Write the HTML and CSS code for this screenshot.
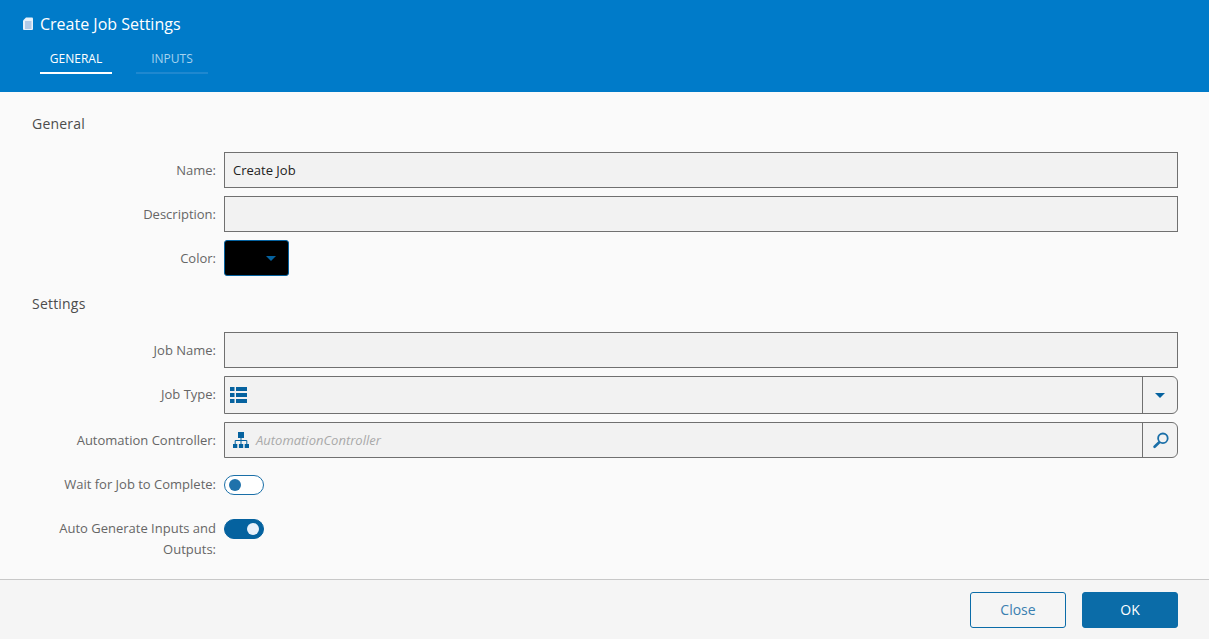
FILE: index.html
```html
<!DOCTYPE html>
<html lang="en">
<head>
<meta charset="utf-8">
<title>Create Job Settings</title>
<link rel="stylesheet" href="styles.css">
</head>
<body>
<div class="dialog">
  <header class="head">
    <div class="title">
      <svg class="title-icon" width="12" height="14" viewBox="0 0 12 14"><path fill="#e8f1fa" d="M4 0.500h6a1 1 0 0 1 1 1V12a1 1 0 0 1-1 1H2a1 1 0 0 1-1-1V3.500z"/><path fill="#7fa3d4" d="M3 4.500h6.500v1H3zM3 6.500h6.500v1H3zM3 8.500h6.500v1H3zM3 10.500h6.500v1H3z"/></svg>
      <span>Create Job Settings</span>
    </div>
    <nav class="tabs">
      <div class="tab active">GENERAL</div>
      <div class="tab">INPUTS</div>
    </nav>
  </header>
  <main class="body">
    <h2 class="section">General</h2>
    <div class="row"><label class="lbl">Name:</label><div class="field dark">Create Job</div></div>
    <div class="row"><label class="lbl">Description:</label><div class="field"></div></div>
    <div class="row"><label class="lbl">Color:</label><div class="color"><span class="caret"></span></div></div>
    <h2 class="section second">Settings</h2>
    <div class="row"><label class="lbl">Job Name:</label><div class="field"></div></div>
    <div class="row tall"><label class="lbl">Job Type:</label>
      <div class="field combo">
        <div class="combo-main">
          <svg width="17" height="16" viewBox="0 0 17 16"><path fill="#05629f" d="M0 0h4.500v4H0zM6 0h11v4H6zM0 6h4.500v4H0zM6 6h11v4H6zM0 12h4.500v4H0zM6 12h11v4H6z"/></svg>
        </div>
        <div class="combo-btn"><span class="caret"></span></div>
      </div>
    </div>
    <div class="row"><label class="lbl">Automation Controller:</label>
      <div class="field combo">
        <div class="combo-main org">
          <svg width="16" height="16" viewBox="0 0 16 16"><path fill="#05629f" d="M5 0h6v6H5zM0 12h4.300v4H0zM5.900 12h4.300v4H5.900zM11.700 12H16v4h-4.300z"/><path fill="none" stroke="#05629f" d="M8 6v6M2.200 12V8.500h11.600V12"/></svg>
          <span class="placeholder">AutomationController</span>
        </div>
        <div class="combo-btn search">
          <svg width="16" height="17" viewBox="0 0 16 17"><circle cx="9.900" cy="6.300" r="4.800" fill="none" stroke="#1a6fa8" stroke-width="1.800"/><path stroke="#1a6fa8" stroke-width="2.600" stroke-linecap="round" d="M6 10.500L1.600 14.800"/></svg>
        </div>
      </div>
    </div>
    <div class="row toggle-row"><label class="lbl">Wait for Job to Complete:</label><div class="toggle"><span class="knob"></span></div></div>
    <div class="row toggle-row"><label class="lbl">Auto Generate Inputs and Outputs:</label><div class="toggle on"><span class="knob"></span></div></div>
  </main>
  <footer class="foot">
    <button class="btn ghost">Close</button>
    <button class="btn primary">OK</button>
  </footer>
</div>
</body>
</html>
```
FILE: styles.css
```css
* { box-sizing: border-box; }
html, body { margin: 0; height: 100%; }
body { font-family: "Open Sans", sans-serif; color: #555; background: #fafafa; overflow: hidden; }
.dialog { width: 1209px; height: 639px; display: flex; flex-direction: column; }
.head { height: 92px; background: #007bc9; padding: 14px 0 0 22px; color: #fff; flex: none; }
.title { display: flex; align-items: center; gap: 6px; font-size: 16px; line-height: 20px; height: 20px; }
.title-icon { flex: none; }
.tabs { display: flex; gap: 24px; margin: 4px 0 0 18px; }
.tab { width: 72px; height: 36px; font-size: 12px; line-height: 42px; font-weight: 400; text-align: center; color: #a6d3ef; border-bottom: 2px solid #1f88cf; }
.tab.active { color: #fff; border-bottom-color: #fff; }
.body { flex: 1; min-height: 0; padding: 22px 31px 0 24px; }
.section { margin: 0 0 18px 8px; font-size: 14px; line-height: 20px; font-weight: 400; letter-spacing: 0.2px; color: #4c4c4c; }
.section.second { margin-top: 18px; }
.row { display: flex; gap: 8px; align-items: center; min-height: 36px; margin-bottom: 8px; }
.lbl { width: 192px; flex: none; text-align: right; font-size: 13px; line-height: 21px; color: #666; }
.field { flex: 1; height: 36px; background: #f2f2f2; border: 1px solid #707070; font-size: 13px; line-height: 35px; padding-left: 8px; color: #222; }
.row.tall .field { height: 38px; line-height: 36px; }
.row.tall { min-height: 38px; }
.row.tall .lbl { padding-bottom: 2px; }
.combo { display: flex; padding: 0; border-radius: 0 6px 6px 0; }
.combo-main { flex: 1; display: flex; align-items: center; gap: 7px; padding-left: 5px; }
.combo-main.org { padding-left: 8px; }
.combo-btn { width: 35px; flex: none; border-left: 1px solid #707070; display: flex; align-items: center; justify-content: center; }
.combo-btn.search { padding-left: 2px; }
.placeholder { font-style: italic; color: #a9a9a9; }
.color { width: 65px; height: 36px; background: #000; border: 1px solid #05629f; border-radius: 3px; display: flex; align-items: center; justify-content: flex-end; padding-right: 12px; }
.caret { width: 0; height: 0; border-left: 5px solid transparent; border-right: 5px solid transparent; border-top: 5px solid #05629f; }
.toggle { width: 40px; height: 20px; border: 1px solid #1a6fa8; border-radius: 10px; background: #fff; padding: 3px 4px; flex: none; display: flex; }
.knob { width: 12px; height: 12px; border-radius: 50%; background: #1f72ab; }
.toggle.on { background: #05629f; border-color: #05629f; justify-content: flex-end; }
.toggle.on .knob { background: #e8f0fa; }
.toggle-row { align-items: flex-start; min-height: 0; margin-bottom: 0; }
.toggle-row .toggle { margin-top: 9px; }
.toggle-row .lbl { padding-top: 8px; }
.toggle-row + .toggle-row { margin-top: 15px; }
.foot { height: 60px; flex: none; background: #f5f5f5; border-top: 1px solid #c8c8c8; display: flex; justify-content: flex-end; gap: 16px; padding: 12px 31px 0 0; }
.btn { width: 96px; height: 36px; border-radius: 3px; font-family: inherit; font-size: 14px; padding: 0 0 2px; }
.ghost { background: #f5f5f5; border: 1px solid #0b6ca8; color: #3a7fb0; }
.primary { background: #0b6ca8; border: 1px solid #0b6ca8; color: #fff; }
```
